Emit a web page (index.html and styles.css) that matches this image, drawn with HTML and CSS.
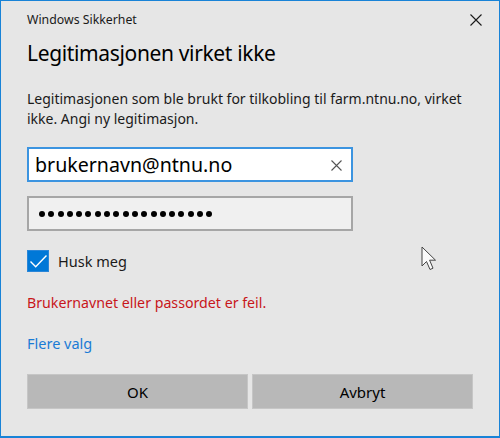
FILE: index.html
```html
<!DOCTYPE html>
<html lang="no">
<head>
<meta charset="utf-8">
<title>Windows Sikkerhet</title>
<link rel="stylesheet" href="styles.css">
</head>
<body>
<div class="window">
  <div class="titlebar">
    <span class="app-name">Windows Sikkerhet</span>
    <span class="close" aria-label="Lukk">
      <svg width="12" height="12" viewBox="0 0 12 12"><path d="M0.5 0.5 L11.5 11.5 M11.5 0.5 L0.5 11.5" stroke="#1a1a1a" stroke-width="1.1" fill="none"/></svg>
    </span>
  </div>
  <div class="content">
    <h1 class="heading">Legitimasjonen virket ikke</h1>
    <p class="msg">Legitimasjonen som ble brukt for tilkobling til farm.ntnu.no, virket ikke. Angi ny legitimasjon.</p>
    <div class="field field-user">
      <span class="field-text">brukernavn@ntnu.no</span>
      <svg class="clear" width="11" height="11" viewBox="0 0 11 11"><path d="M0.5 0.5 L10.5 10.5 M10.5 0.5 L0.5 10.5" stroke="#555" stroke-width="1.1" fill="none"/></svg>
    </div>
    <div class="field field-pass">
      <span class="dot"></span><span class="dot"></span><span class="dot"></span><span class="dot"></span><span class="dot"></span><span class="dot"></span><span class="dot"></span><span class="dot"></span><span class="dot"></span><span class="dot"></span><span class="dot"></span><span class="dot"></span><span class="dot"></span><span class="dot"></span><span class="dot"></span><span class="dot"></span><span class="dot"></span><span class="dot"></span><span class="dot"></span>
    </div>
    <div class="check-row">
      <span class="checkbox">
        <svg width="22" height="22" viewBox="0 0 22 22"><polyline points="3.5,11.5 8.7,16.7 19.5,5.5" stroke="#fff" stroke-width="1.4" fill="none"/></svg>
      </span>
      <span class="check-label">Husk meg</span>
    </div>
    <p class="error">Brukernavnet eller passordet er feil.</p>
    <a class="link" href="#">Flere valg</a>
    <div class="buttons">
      <button class="btn">OK</button>
      <button class="btn">Avbryt</button>
    </div>
  </div>
  <svg class="cursor" width="17" height="26" viewBox="0 0 17 26"><path d="M1 1 L1 20 L5.5 15.5 L9 23.5 L12 22.2 L8.6 14.2 L14.5 14.2 Z" fill="#fafafa" stroke="#444" stroke-width="1"/></svg>
</div>
</body>
</html>
```
FILE: styles.css
```css
* { box-sizing: border-box; }
html, body { margin: 0; padding: 0; }
body {
  width: 500px;
  height: 438px;
  background: #e6e6e6;
  font-family: "Noto Sans", "Open Sans", sans-serif;
  color: #000;
}
.window {
  position: relative;
  width: 500px;
  height: 438px;
  background: #e6e6e6;
  border: 1px solid #1883d7;
  border-bottom-width: 2px;
  overflow: hidden;
}
.titlebar {
  height: 37px;
  display: flex;
  align-items: center;
  justify-content: space-between;
  padding: 0 13px 0 26px;
}
.app-name {
  font-size: 12.3px;
  color: #1a1a1a;
  line-height: 16px;
}
.close {
  display: flex;
  width: 20px;
  height: 20px;
  align-items: center;
  justify-content: center;
}
.content {
  padding: 0 26px;
  display: flex;
  flex-direction: column;
  align-items: flex-start;
}
.heading {
  margin: 0;
  font-weight: normal;
  font-size: 21px;
  letter-spacing: -0.35px;
  line-height: 30px;
  color: #000;
}
.msg {
  margin: 21px 0 0;
  font-size: 14px;
  line-height: 20px;
  color: #1a1a1a;
}
.field {
  width: 326px;
  height: 35px;
  border: 2px solid #999;
  display: flex;
  align-items: center;
}
.field-user {
  margin-top: 18px;
  background: #fff;
  border-color: #3c94e0;
  padding: 0 9px 0 6px;
  justify-content: space-between;
}
.field-text {
  font-size: 19.6px;
  line-height: 24px;
  color: #000;
}
.clear { margin-top: 1px; }
.field-pass {
  margin-top: 14px;
  background: #f0f0f0;
  border-color: #a6a6a6;
  padding: 0 0 0 10px;
  gap: 3.3px;
}
.dot {
  width: 6px;
  height: 6px;
  border-radius: 50%;
  background: #000;
}
.check-row {
  margin-top: 19px;
  display: flex;
  align-items: center;
  gap: 9px;
}
.checkbox {
  width: 22px;
  height: 22px;
  background: #0078d7;
  border: 1px solid #2a86d8;
  display: flex;
}
.checkbox svg { margin: -1px; }
.check-label {
  font-size: 14.5px;
  line-height: 20px;
  color: #1a1a1a;
}
.error {
  margin: 21px 0 0;
  font-size: 14.2px;
  line-height: 20px;
  color: #c8161b;
}
.link {
  margin-top: 20px;
  font-size: 14.5px;
  line-height: 20px;
  color: #1a7bd5;
  text-decoration: none;
}
.buttons {
  margin-top: 21px;
  display: flex;
  gap: 4px;
  width: 446px;
}
.btn {
  flex: 1;
  height: 35px;
  background: #b8b8b8;
  border: 1px solid #c6c6c6;
  font-family: inherit;
  font-size: 15px;
  color: #000;
  padding: 0;
}
.cursor {
  position: absolute;
  left: 420px;
  top: 245px;
}
```
